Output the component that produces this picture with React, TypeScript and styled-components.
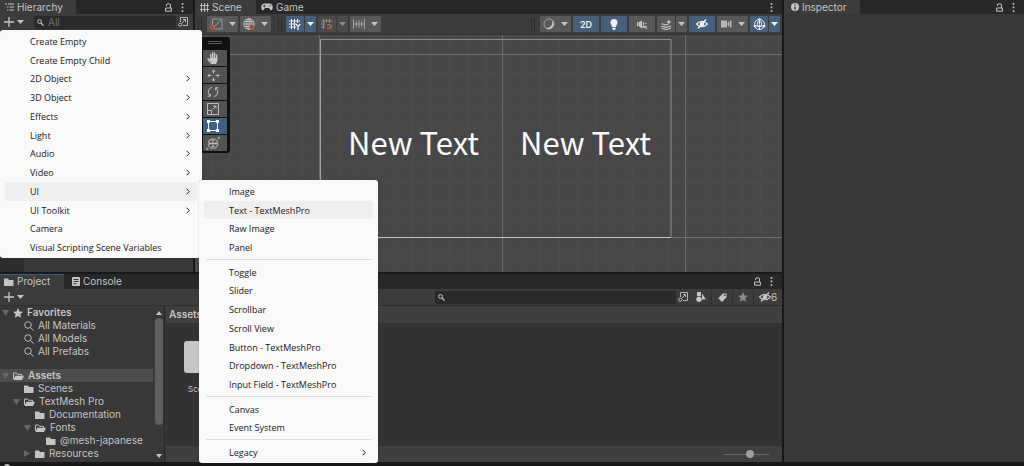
import React from "react";
import styled, { createGlobalStyle, css } from "styled-components";

const GlobalStyle = createGlobalStyle`
  *, *::before, *::after { box-sizing: border-box; }
  html, body, #root { height: 100%; }
  body {
    margin: 0;
    overflow: hidden;
    background: #191919;
    color: #c4c4c4;
    font: 10px/13px Inter, "Liberation Sans", sans-serif;
  }
  button, input { font: inherit; color: inherit; border: 0; padding: 0; margin: 0; background: none; }
  svg { display: block; flex: none; }
`;

/* ---------- window frame ---------- */

const Editor = styled.div`
  position: relative;
  height: 100%;
  display: flex;
  flex-direction: column;
`;

const Docks = styled.main`
  flex: 1;
  min-height: 0;
  display: flex;
  gap: 2px;
`;

const Workspace = styled.div`
  flex: 1;
  min-width: 0;
  display: grid;
  grid-template-rows: 68fr 47fr;
  gap: 2px;
`;

const UpperDocks = styled.div`
  min-height: 0;
  display: flex;
  gap: 2px;
`;

const Panel = styled.section<{ $width?: number }>`
  ${(p) => (p.$width ? css`width: ${p.$width}px; flex: none;` : css`flex: 1;`)}
  min-width: 0;
  min-height: 0;
  display: flex;
  flex-direction: column;
  background: #383838;
`;

const StatusBar = styled.footer`
  height: 4px;
  flex: none;
  overflow: hidden;
  padding: 2px 0 0 4px;
  background: #191919;
`;

const TabBar = styled.header<{ $tall?: boolean }>`
  height: ${(p) => (p.$tall ? 15 : 14)}px;
  flex: none;
  display: flex;
  align-items: stretch;
  background: #282828;
`;

const Tab = styled.button<{ $active?: boolean; $focused?: boolean; $width: number; $indent?: number }>`
  width: ${(p) => p.$width}px;
  display: flex;
  align-items: center;
  gap: 3px;
  padding-left: ${(p) => p.$indent ?? 5}px;
  white-space: nowrap;
  background: ${(p) => (p.$active ? "#3c3c3c" : "transparent")};
  box-shadow: ${(p) => (p.$focused ? "inset 0 1px #37618c" : "none")};
`;

const TabActions = styled.div`
  margin-left: auto;
  display: flex;
  align-items: center;
  gap: 9px;
  padding-right: 9px;
`;

const IconButton = styled.button`
  display: flex;
  align-items: center;
  justify-content: center;
`;

const Toolbar = styled.div`
  height: 17px;
  flex: none;
  display: flex;
  align-items: center;
  background: #3c3c3c;
  border-bottom: 1px solid #303030;
`;

const AddButton = styled.button`
  width: 34px;
  flex: none;
  display: flex;
  align-items: center;
  gap: 3px;
  padding-left: 4px;
`;

const SearchField = styled.label<{ $width?: number }>`
  ${(p) => (p.$width ? css`width: ${p.$width}px;` : css`flex: 1; margin-right: 4px;`)}
  min-width: 0;
  height: 13px;
  display: flex;
  align-items: center;
  gap: 4px;
  padding-left: 3px;
  border-radius: 2px;
  background: #2a2a2a;
`;

const SearchInput = styled.input`
  flex: 1;
  min-width: 0;
  height: 13px;
  outline: 0;
  &::placeholder { color: #707070; opacity: 1; }
`;

const SearchPicker = styled.button`
  width: 13px;
  height: 13px;
  flex: none;
  display: grid;
  place-items: center;
  background: #3a3a3a;
`;

/* ---------- hierarchy ---------- */

const HierarchyBody = styled.div`
  flex: 1;
  border-left: 24px solid #2d2d2d;
`;

/* ---------- scene ---------- */

const SceneToolbar = styled.div`
  height: 21px;
  flex: none;
  display: flex;
  align-items: center;
  gap: 2px;
  padding: 0 2px 0 3px;
  background: #3c3c3c;
  border-bottom: 1px solid #333;
`;

const Handle = styled.span<{ $before?: number; $after: number }>`
  width: 4px;
  height: 13px;
  margin: 0 ${(p) => p.$after}px 0 ${(p) => p.$before ?? 0}px;
  border: solid #2c2c2c;
  border-width: 0 1px;
`;

const Spacer = styled.span`
  flex: 1;
`;

const ToolGroup = styled.div`
  display: flex;
  gap: 1px;
`;

const ToolButton = styled.button<{ $width: number; $on?: boolean; $dim?: boolean }>`
  width: ${(p) => p.$width}px;
  height: 16px;
  display: flex;
  align-items: center;
  justify-content: center;
  gap: 6px;
  border-radius: 1px;
  background: ${(p) => (p.$on ? "#46607c" : p.$dim ? "#4a4a4a" : "#585858")};
  color: ${(p) => (p.$on ? "#f0f0f0" : p.$dim ? "#8c8c8c" : "#c4c4c4")};
  font-size: 9px;
  font-weight: 600;
`;

const Canvas = styled.div`
  position: relative;
  flex: 1;
  min-height: 0;
  overflow: hidden;
  background: #474747;
`;

const Grid = styled.svg`
  width: 100%;
  height: 100%;
`;

const SceneLabel = styled.span<{ $x: number }>`
  position: absolute;
  left: ${(p) => p.$x}px;
  top: 85px;
  color: #fafafa;
  font: 31px/44px "Noto Sans CJK JP", sans-serif;
  white-space: nowrap;
`;

const Palette = styled.div`
  position: absolute;
  left: 6px;
  top: 2px;
  display: grid;
  gap: 1px;
  padding: 3px 3px 2px 2px;
  border-radius: 3px;
  background: #101010;
`;

const PaletteGrip = styled.span`
  height: 3px;
  width: 14px;
  margin: 1px 0 5px 5px;
  border: solid #555;
  border-width: 1px 0;
`;

const PaletteTool = styled.button<{ $on?: boolean }>`
  width: 24px;
  height: 16px;
  display: grid;
  place-items: center;
  padding-right: 4px;
  color: ${(p) => (p.$on ? "#fff" : "#c8c8c8")};
  background: ${(p) => (p.$on ? "#3f5f83" : "#525252")};
`;

/* ---------- project ---------- */

const ProjectBody = styled.div`
  flex: 1;
  min-height: 0;
  display: flex;
  gap: 1px;
`;

const TreePane = styled.div`
  width: 165px;
  display: flex;
  border-right: 1px solid #262626;
  overflow: hidden;
`;

const Tree = styled.ul`
  flex: 1;
  margin: 0;
  padding: 0;
  list-style: none;
`;

const TreeRow = styled.li<{ $depth: number; $strong?: boolean; $selected?: boolean; $gap?: boolean }>`
  height: 13px;
  display: flex;
  align-items: center;
  gap: 4px;
  margin-top: ${(p) => (p.$gap ? 11 : 0)}px;
  padding-left: ${(p) => 2 + p.$depth * 11}px;
  font-weight: ${(p) => (p.$strong ? 600 : 400)};
  background: ${(p) => (p.$selected ? "#4d4d4d" : "transparent")};
  white-space: nowrap;
`;

const Fold = styled.span`
  width: 7px;
`;

const Scroller = styled.div`
  width: 11px;
  display: flex;
  flex-direction: column;
  align-items: center;
  gap: 3px;
  padding: 5px 1px 4px 2px;
`;

const ScrollThumb = styled.span`
  width: 8px;
  height: 107px;
  margin-bottom: auto;
  border-radius: 4px;
  background: #5e5e5e;
`;

const Browser = styled.div`
  flex: 1;
  min-width: 0;
  display: flex;
  flex-direction: column;
  background: #333;
`;

const Crumbs = styled.div`
  height: 17px;
  padding: 2px 3px;
  font-weight: 600;
  background: #3f3f3f;
`;

const AssetGrid = styled.div`
  flex: 1;
  padding: 18px;
`;

const Asset = styled.figure`
  width: 36px;
  margin: 0;
  text-align: center;
  font-size: 8px;
`;

const AssetThumb = styled.div`
  height: 32px;
  margin-bottom: 10px;
  border-radius: 3px;
  background: #c6c6c6;
`;

const BrowserFooter = styled.div`
  height: 16px;
  display: flex;
  justify-content: flex-end;
  align-items: center;
  padding-right: 13px;
  background: #3f3f3f;
`;

const ZoomSlider = styled.input`
  appearance: none;
  width: 45px;
  height: 10px;
  &::-webkit-slider-runnable-track { height: 1px; background: #6a6a6a; }
  &::-webkit-slider-thumb {
    appearance: none;
    width: 8px;
    height: 8px;
    margin-top: -4px;
    border-radius: 50%;
    background: #9d9d9d;
  }
`;

const Filters = styled.div`
  display: flex;
  margin-left: 2px;
`;

const FilterButton = styled.button<{ $width: number }>`
  width: ${(p) => p.$width}px;
  height: 16px;
  display: flex;
  align-items: center;
  justify-content: center;
  border-right: 1px solid #303030;
  &:last-child { border-right: 0; }
`;

/* ---------- menus ---------- */

const Menu = styled.div<{ $x: number; $y: number; $width: number; $height: number }>`
  position: absolute;
  left: ${(p) => p.$x}px;
  top: ${(p) => p.$y}px;
  width: ${(p) => p.$width}px;
  height: ${(p) => p.$height}px;
  display: flex;
  flex-direction: column;
  padding: 2px 5px 1px;
  border-radius: 3px;
  background: #f9f9f9;
  box-shadow: 0 0 1px rgba(0, 0, 0, 0.5);
  color: #202020;
  font-family: "Open Sans", "Noto Sans", sans-serif;
  font-size: 9px;
`;

const MenuItem = styled.button<{ $active?: boolean }>`
  flex: 1 1 0;
  min-height: 0;
  display: flex;
  align-items: center;
  justify-content: space-between;
  padding: 0 7px 0 25px;
  border-radius: 2px;
  background: ${(p) => (p.$active ? "#efefef" : "transparent")};
  white-space: nowrap;
`;

const Separator = styled.hr`
  flex: none;
  width: 166px;
  height: 1px;
  margin: 2px auto 3px;
  border: 0;
  background: #dedede;
`;

/* ---------- icons ---------- */

type IconProps = { children: React.ReactNode; w?: number; h?: number };
const Icon = ({ children, w = 12, h = 12 }: IconProps) => (
  <svg width={w} height={h} viewBox={`0 0 ${w} ${h}`} fill="none" stroke="currentColor" strokeWidth="1" aria-hidden="true">
    {children}
  </svg>
);

const Caret = () => <Icon w={7} h={4}><path d="M0 0h7L3.5 4z" fill="currentColor" stroke="none" /></Icon>;
const Plus = () => <Icon w={10} h={10}><path d="M5 0v10M0 5h10" strokeWidth="1.3" /></Icon>;
const Lock = () => (
  <Icon w={7} h={9}><path d="M1.500 3V2Q1.500.700 3.500.700T5.500 2v3" /><path d="M.6 5h5.800v3.200H.6z" /></Icon>
);
const Dots = () => (
  <Icon w={3} h={9}><path d="M.7 0h1.600v1.700H.7zM.7 3.600h1.600v1.700H.7zM.7 7.200h1.600V9H.7z" fill="currentColor" stroke="none" /></Icon>
);
const HierarchyIcon = () => <Icon w={9} h={8}><path d="M0 1h2M3 1h6M2 4h1.500M4.500 4H9M2 7h1.500M4.500 7H9" /></Icon>;
const HashIcon = () => <Icon w={9} h={9}><path d="M1.500 0v9M4.500 0v9M7.500 0v9M0 2.500h9M0 6.500h9" strokeWidth=".9" /></Icon>;
const PadIcon = () => (
  <Icon w={12} h={8}>
    <path d="M3 .5h6Q12 1 11.700 5 11.300 8 9.500 7L8 5H4L2.500 7Q.7 8 .3 5 0 1 3 .5z" fill="currentColor" stroke="none" />
    <path d="M2 3h2.600M3.300 1.700v2.600M7.500 3.300h1M9 2.300h1" stroke="#282828" strokeWidth=".8" />
  </Icon>
);
const InfoIcon = () => (
  <Icon w={8} h={8}><circle cx="4" cy="4" r="4" fill="currentColor" stroke="none" /><path d="M4 1.300v1.300M4 3.400v3.400" stroke="#333" strokeWidth="1.300" /></Icon>
);
const ConsoleIcon = () => (
  <Icon w={8} h={9}><rect width="8" height="9" rx="1" fill="currentColor" stroke="none" /><path d="M1.500 2.500h5M1.500 4.500h5M1.500 6.700h3" stroke="#282828" strokeWidth=".9" /></Icon>
);
const FolderIcon = () => (
  <Icon w={10} h={8}><path d="M0 .5h4l1 1.500h4.500V8H0z" fill="currentColor" stroke="none" /></Icon>
);
const OpenFolderIcon = () => (
  <Icon w={11} h={8}><path d="M.5 7V1h3l1 1.300h4V4" /><path d="M2.300 3.800H11L9 8H.5z" fill="currentColor" stroke="none" /></Icon>
);
const Lens = () => <Icon w={10} h={10}><circle cx="4" cy="4" r="3.300" strokeWidth=".9" /><path d="M6.400 6.400 9.500 9.500" /></Icon>;
const SmallLens = () => <Icon w={7} h={7}><circle cx="2.500" cy="2.500" r="1.900" /><path d="M4 4l2.600 2.600" strokeWidth="1.200" /></Icon>;
const PickerIcon = () => (
  <Icon w={10} h={10}><path d="M2.500 5V.5h7v8H5" strokeWidth=".9" /><path d="M4 6l3.500-3.500M5 2.500h2.500V5" strokeWidth=".9" /><circle cx="2.300" cy="7.700" r="1.600" strokeWidth=".9" /></Icon>
);
const StarIcon = ({ color = "currentColor" }: { color?: string }) => (
  <Icon w={10} h={10}><path d="M5 0l1.500 3.400 3.500.3-2.700 2.500.9 3.600L5 7.900 1.800 9.800l.9-3.600L0 3.700l3.500-.3z" fill={color} stroke="none" /></Icon>
);
const FoldOpen = () => <Icon w={7} h={6}><path d="M0 0h7L3.500 6z" fill="#686868" stroke="none" /></Icon>;
const FoldShut = () => <Icon w={6} h={7}><path d="M0 0v7l6-3.500z" fill="#686868" stroke="none" /></Icon>;
const Chevron = () => <Icon w={4} h={7}><path d="M.5.700 3.300 3.500.5 6.300" /></Icon>;

const PivotIcon = () => (
  <Icon w={13} h={12}><path d="M2.500 8V1h9.500v10H5M3.500 9.500l8-8" strokeWidth=".9" stroke="#a0a0a0" /><circle cx="2.500" cy="9.300" r="1.900" stroke="#d0593c" strokeWidth="1.200" /></Icon>
);
const GlobeIcon = () => (
  <Icon w={12} h={12}><g strokeWidth=".9"><circle cx="6" cy="6" r="5.200" /><ellipse cx="6" cy="6" rx="2.300" ry="5.200" /><path d="M6 .8v10.400M.8 6h10.400M1.500 3.500h9M1.500 8.500h9" /></g><circle cx="8.800" cy="9" r="2" fill="#585858" stroke="#d0593c" strokeWidth="1.200" /></Icon>
);
const GridYIcon = () => (
  <Icon w={12} h={12}><path d="M2.500 1v10M5.500 1v10M8.500 1v4M0 3h11M0 6h7M0 9h7" /><path d="M7 6l2 2.500L11.300 6M9 8.500V12" strokeWidth="1.300" /></Icon>
);
const GridSnapIcon = () => (
  <Icon w={12} h={12}><path d="M2.500 1v10M5.500 1v4M8.500 1v4M0 3h11M0 6h4M0 9h4" /><path d="M6 6.700h2.500a1.800 1.800 0 010 3.600H6" stroke="#b85c48" strokeWidth="1.600" /></Icon>
);
const IncrementIcon = () => <Icon w={12} h={10}><path d="M.5 0v10M11.500 0v10M3.300 2v6M6 1v8M8.700 2v6M.5 5h11" strokeWidth=".9" stroke="#a8a8a8" /></Icon>;
const SphereIcon = () => (
  <Icon w={12} h={12}><circle cx="6" cy="6" r="5" stroke="#9c9c9c" /><path d="M9 1.700A5.300 5.300 0 112 9.700Q4 10.500 7 8.700 10.500 6 9 1.700z" fill="currentColor" stroke="none" /></Icon>
);
const BulbIcon = () => <Icon w={8} h={11}><path d="M4 0a3.500 3.500 0 013.500 3.500C7.500 5.500 6 6 6 8H2C2 6 .5 5.500.5 3.500A3.500 3.500 0 014 0zM2.300 8.700h3.400v1L4.800 11H3.200l-.9-1.300z" fill="currentColor" stroke="none" /></Icon>;
const AudioIcon = () => (
  <Icon w={10} h={9}><path d="M0 2h1.500v4H0zM2 2 5 .5v8L2 6.500z" fill="currentColor" stroke="none" /><path d="M6.500 2v3.500M6 8V6.500h1.500V8M9 5.500V9M8 3.500h1.500" strokeWidth="1.200" /></Icon>
);
const EffectsIcon = () => (
  <Icon w={11} h={11}><path d="M.5 4.500l4 1.500 3-1M.5 7l4.500 1.500L10 7M.5 9l4.500 1.700L10 9" strokeWidth="1.200" /><path d="M7.800 0l.8 2.200 2.200.8-2.200.8-.8 2.200L7 3.800 4.800 3 7 2.200z" fill="currentColor" stroke="none" /></Icon>
);
const EyeOff = () => (
  <Icon w={12} h={10}><path d="M.5 5Q6-.500 11.500 5 6 10.500.5 5z" strokeWidth="1.100" /><circle cx="6" cy="5" r="2.300" fill="currentColor" stroke="none" /><path d="M2 9.500 10 .5" strokeWidth="1.400" /></Icon>
);
const CameraIcon = () => <Icon w={11} h={8}><path d="M0 .5h6v7H0zM6.500 3 8.500 1v6L6.500 5zM9 .5h1.500v7H9z" fill="#b4b4b4" stroke="none" /></Icon>;
const GizmoIcon = () => (
  <Icon w={13} h={13}><circle cx="6.500" cy="6.500" r="5" /><path d="M6.500 1.500v5M1.500 7.500q5 2 10 0M6.500 7v5" /><circle cx="6.500" cy="1.500" r="1.300" fill="currentColor" stroke="none" /><path d="M4.500 4h4v4h-4z" strokeWidth=".8" /><circle cx="1.800" cy="8" r="1.200" fill="currentColor" stroke="none" /><circle cx="11.200" cy="8" r="1.200" fill="currentColor" stroke="none" /></Icon>
);
const ShapesIcon = () => (
  <Icon w={10} h={10}><g fill="currentColor" stroke="none"><path d="M1 0h4v4H1zM6 1.500 10 7.500H6z" /><circle cx="3" cy="7.300" r="2.700" /></g></Icon>
);
const TagIcon = () => (
  <Icon w={9} h={9}><path d="M4.800.500H8.500v3.700L4 9 .3 5.200z" fill="currentColor" stroke="none" /><circle cx="6.700" cy="2.300" r=".9" fill="#3c3c3c" stroke="none" /></Icon>
);

const HandIcon = () => (
  <Icon w={12} h={12}>
    <path d="M4.700 12 1.300 8Q.3 6.500 1.500 6.700L3.600 8.200" strokeWidth="1.100" />
    <path d="M3.800 8V2.500M5.700 7V.8M7.600 7V1.300M9.600 8V3" strokeWidth="1.400" strokeLinecap="round" />
    <path d="M3.100 6h7.200v3L9 12H5L3 8.500z" fill="currentColor" stroke="none" />
  </Icon>
);
const MoveIcon = () => (
  <Icon w={13} h={13}><path d="M6.500 1v3.500M6.500 8.500V12M1 6.500h3.500M8.500 6.500H12M4.900 2.600 6.500 1l1.600 1.600M4.900 10.400l1.600 1.600 1.600-1.600M2.600 4.900 1 6.500l1.600 1.600M10.400 4.900 12 6.500l-1.600 1.600" strokeWidth=".9" /></Icon>
);
const RotateIcon = () => (
  <Icon w={12} h={12}><path d="M5 1.300A5 5 0 003 10M7 10.700A5 5 0 009 2M.8 10.300H3.400V7.600M11.200 1.700H8.600v2.700" strokeWidth=".9" /></Icon>
);
const ScaleIcon = () => (
  <Icon w={12} h={12}><path d="M.5.500h11v11H.5zM.5 7.500h4v4M5.500 6.500l3.500-3.500M6.300 3H9v2.700" strokeWidth=".9" /></Icon>
);
const RectIcon = () => (
  <Icon w={12} h={12}><path d="M1.500 1.500h9v9h-9z" strokeWidth=".9" /><path d="M0 0h3v3H0zM9 0h3v3H9zM0 9h3v3H0zM9 9h3v3H9z" fill="currentColor" stroke="none" /></Icon>
);
const TransformIcon = () => (
  <Icon w={14} h={13}><circle cx="7" cy="6.500" r="4.900" strokeWidth=".9" strokeDasharray="6.700 1" /><path d="M7 2.500v8M3 6.500h8M5.500 4 7 2.500 8.500 4M5.500 9 7 10.500 8.500 9M4.500 5 3 6.500 4.500 8M9.500 5 11 6.500 9.500 8M11.500.7l1.800-.2-.2 1.800M2.500 12.300l-1.800.2.2-1.800" strokeWidth=".9" /></Icon>
);

/* ---------- data ---------- */

type Entry = { label: string; sub?: boolean; active?: boolean };

const createMenu: Entry[] = [
  { label: "Create Empty" },
  { label: "Create Empty Child" },
  { label: "2D Object", sub: true },
  { label: "3D Object", sub: true },
  { label: "Effects", sub: true },
  { label: "Light", sub: true },
  { label: "Audio", sub: true },
  { label: "Video", sub: true },
  { label: "UI", sub: true, active: true },
  { label: "UI Toolkit", sub: true },
  { label: "Camera" },
  { label: "Visual Scripting Scene Variables" },
];

const uiMenu: Entry[][] = [
  [{ label: "Image" }, { label: "Text - TextMeshPro", active: true }, { label: "Raw Image" }, { label: "Panel" }],
  [
    { label: "Toggle" },
    { label: "Slider" },
    { label: "Scrollbar" },
    { label: "Scroll View" },
    { label: "Button - TextMeshPro" },
    { label: "Dropdown - TextMeshPro" },
    { label: "Input Field - TextMeshPro" },
  ],
  [{ label: "Canvas" }, { label: "Event System" }],
  [{ label: "Legacy", sub: true }],
];

type Node = {
  label: string;
  depth: number;
  fold?: "open" | "shut";
  icon: "star" | "lens" | "folder" | "open";
  strong?: boolean;
  selected?: boolean;
  gap?: boolean;
};

const tree: Node[] = [
  { label: "Favorites", depth: 0, fold: "open", icon: "star", strong: true },
  { label: "All Materials", depth: 1, icon: "lens" },
  { label: "All Models", depth: 1, icon: "lens" },
  { label: "All Prefabs", depth: 1, icon: "lens" },
  { label: "Assets", depth: 0, fold: "open", icon: "open", strong: true, selected: true, gap: true },
  { label: "Scenes", depth: 1, icon: "folder" },
  { label: "TextMesh Pro", depth: 1, fold: "open", icon: "open" },
  { label: "Documentation", depth: 2, icon: "folder" },
  { label: "Fonts", depth: 2, fold: "open", icon: "open" },
  { label: "@mesh-japanese", depth: 3, icon: "folder" },
  { label: "Resources", depth: 2, fold: "shut", icon: "folder" },
  { label: "Shaders", depth: 2, fold: "shut", icon: "folder" },
];

const treeIcons = { star: <StarIcon />, lens: <Lens />, folder: <FolderIcon />, open: <OpenFolderIcon /> };

const tools = [
  { name: "View", icon: <HandIcon /> },
  { name: "Move", icon: <MoveIcon /> },
  { name: "Rotate", icon: <RotateIcon /> },
  { name: "Scale", icon: <ScaleIcon /> },
  { name: "Rect", icon: <RectIcon />, on: true },
  { name: "Transform", icon: <TransformIcon /> },
];

/* ---------- parts ---------- */

const Item = ({ entry }: { entry: Entry }) => (
  <MenuItem role="menuitem" $active={entry.active}>
    {entry.label}
    {entry.sub && <Chevron />}
  </MenuItem>
);

const PanelActions = ({ lock = true }: { lock?: boolean }) => (
  <TabActions>
    {lock && <IconButton aria-label="Lock"><Lock /></IconButton>}
    <IconButton aria-label="Options"><Dots /></IconButton>
  </TabActions>
);

const Hierarchy = () => (
  <Panel $width={193}>
    <TabBar>
      <Tab $active $width={76}><HierarchyIcon />Hierarchy</Tab>
      <PanelActions />
    </TabBar>
    <Toolbar>
      <AddButton aria-label="Create"><Plus /><Caret /></AddButton>
      <SearchField>
        <SmallLens />
        <SearchInput aria-label="Search hierarchy" placeholder="All" />
        <SearchPicker aria-label="Open search"><PickerIcon /></SearchPicker>
      </SearchField>
    </Toolbar>
    <HierarchyBody />
  </Panel>
);

const Scene = () => (
  <Panel>
    <TabBar>
      <Tab $active $width={61}><HashIcon />Scene</Tab>
      <Tab $width={60}><PadIcon />Game</Tab>
      <PanelActions lock={false} />
    </TabBar>
    <SceneToolbar>
      <Handle $after={3} />
      <ToolButton $width={31} aria-label="Pivot"><PivotIcon /><Caret /></ToolButton>
      <ToolButton $width={31} aria-label="Global"><GlobeIcon /><Caret /></ToolButton>
      <Handle $before={5} $after={2} />
      <ToolGroup>
        <ToolButton $on $width={18} aria-label="Grid"><GridYIcon /></ToolButton>
        <ToolButton $on $width={11} aria-label="Grid options"><Caret /></ToolButton>
      </ToolGroup>
      <ToolGroup>
        <ToolButton $dim $width={18} aria-label="Grid snapping"><GridSnapIcon /></ToolButton>
        <ToolButton $dim $width={11} aria-label="Snapping options"><Caret /></ToolButton>
      </ToolGroup>
      <ToolButton $width={31} aria-label="Increment snapping"><IncrementIcon /><Caret /></ToolButton>
      <Spacer />
      <Handle $after={3} />
      <ToolButton $width={31} aria-label="Draw mode"><SphereIcon /><Caret /></ToolButton>
      <ToolButton $on $width={26}>2D</ToolButton>
      <ToolButton $on $width={26} aria-label="Lighting"><BulbIcon /></ToolButton>
      <ToolButton $width={26} aria-label="Audio"><AudioIcon /></ToolButton>
      <ToolGroup>
        <ToolButton $width={18} aria-label="Effects"><EffectsIcon /></ToolButton>
        <ToolButton $width={11} aria-label="Effects options"><Caret /></ToolButton>
      </ToolGroup>
      <ToolButton $on $width={26} aria-label="Visibility"><EyeOff /></ToolButton>
      <ToolButton $width={31} aria-label="Camera"><CameraIcon /><Caret /></ToolButton>
      <ToolGroup>
        <ToolButton $on $width={18} aria-label="Gizmos"><GizmoIcon /></ToolButton>
        <ToolButton $on $width={11} aria-label="Gizmo options"><Caret /></ToolButton>
      </ToolGroup>
    </SceneToolbar>
    <Canvas>
      <Grid aria-hidden="true">
        <defs>
          <pattern id="minor" x="15.800" y="1" width="18.300" height="18.300" patternUnits="userSpaceOnUse">
            <path d="M.5 0v18.300M0 .5h18.300" stroke="#4c4c4c" />
          </pattern>
          <pattern id="major" x="124" y="19" width="183" height="183" patternUnits="userSpaceOnUse">
            <path d="M.5 0v183M0 .5h183" stroke="#6c6c6c" />
          </pattern>
        </defs>
        <rect width="100%" height="100%" fill="url(#minor)" />
        <rect width="100%" height="100%" fill="url(#major)" />
        <path d="M125.500 202.500V4.500" stroke="#a0a0a0" />
        <path d="M125.500 4.500h350.500V202" stroke="#8c8c8c" fill="none" />
        <path d="M125.500 202.500h350.500" stroke="#c0c0c0" />
      </Grid>
      <SceneLabel $x={153}>New Text</SceneLabel>
      <SceneLabel $x={325}>New Text</SceneLabel>
      <Palette>
        <PaletteGrip />
        {tools.map((t) => (
          <PaletteTool key={t.name} $on={t.on} aria-label={`${t.name} tool`}>{t.icon}</PaletteTool>
        ))}
      </Palette>
    </Canvas>
  </Panel>
);

const Project = () => (
  <Panel>
    <TabBar $tall>
      <Tab $active $focused $width={64} $indent={4}><FolderIcon />Project</Tab>
      <Tab $width={70} $indent={8}><ConsoleIcon />Console</Tab>
      <PanelActions />
    </TabBar>
    <Toolbar>
      <AddButton aria-label="Create"><Plus /><Caret /></AddButton>
      <Spacer />
      <SearchField $width={254}>
        <SmallLens />
        <SearchInput aria-label="Search project" />
        <SearchPicker aria-label="Open search"><PickerIcon /></SearchPicker>
      </SearchField>
      <Filters>
        <FilterButton $width={21} aria-label="Filter by type"><ShapesIcon /></FilterButton>
        <FilterButton $width={21} aria-label="Filter by label"><TagIcon /></FilterButton>
        <FilterButton $width={21} aria-label="Save search"><StarIcon color="#8a8a8a" /></FilterButton>
        <FilterButton $width={28}><EyeOff />6</FilterButton>
      </Filters>
    </Toolbar>
    <ProjectBody>
      <TreePane>
        <Tree>
          {tree.map((n) => (
            <TreeRow key={n.label} $depth={n.depth} $strong={n.strong} $selected={n.selected} $gap={n.gap}>
              <Fold>{n.fold === "open" ? <FoldOpen /> : n.fold === "shut" ? <FoldShut /> : null}</Fold>
              {treeIcons[n.icon]}
              {n.label}
            </TreeRow>
          ))}
        </Tree>
        <Scroller>
          <Icon w={6} h={4}><path d="M0 4h6L3 0z" fill="currentColor" stroke="none" /></Icon>
          <ScrollThumb />
          <Icon w={6} h={4}><path d="M0 0h6L3 4z" fill="currentColor" stroke="none" /></Icon>
        </Scroller>
      </TreePane>
      <Browser>
        <Crumbs>Assets</Crumbs>
        <AssetGrid>
          <Asset>
            <AssetThumb />
            <figcaption>Scenes</figcaption>
          </Asset>
        </AssetGrid>
        <BrowserFooter>
          <ZoomSlider type="range" aria-label="Icon size" min={0} max={100} defaultValue={59} />
        </BrowserFooter>
      </Browser>
    </ProjectBody>
  </Panel>
);

export default function App() {
  return (
    <Editor>
      <GlobalStyle />
      <Docks>
        <Workspace>
          <UpperDocks>
            <Hierarchy />
            <Scene />
          </UpperDocks>
          <Project />
        </Workspace>
        <Panel $width={240}>
          <TabBar>
            <Tab $active $width={76} $indent={7}><InfoIcon />Inspector</Tab>
            <PanelActions />
          </TabBar>
        </Panel>
      </Docks>
      <StatusBar>
        <Icon w={6} h={6}><circle cx="3" cy="3" r="3" fill="currentColor" stroke="none" /></Icon>
      </StatusBar>
      <Menu role="menu" aria-label="Create" $x={0} $y={30} $width={202} $height={228}>
        {createMenu.map((e) => <Item key={e.label} entry={e} />)}
      </Menu>
      <Menu role="menu" aria-label="UI" $x={199} $y={180} $width={179} $height={283}>
        {uiMenu.map((group, i) => (
          <React.Fragment key={i}>
            {i > 0 && <Separator />}
            {group.map((e) => <Item key={e.label} entry={e} />)}
          </React.Fragment>
        ))}
      </Menu>
    </Editor>
  );
}
